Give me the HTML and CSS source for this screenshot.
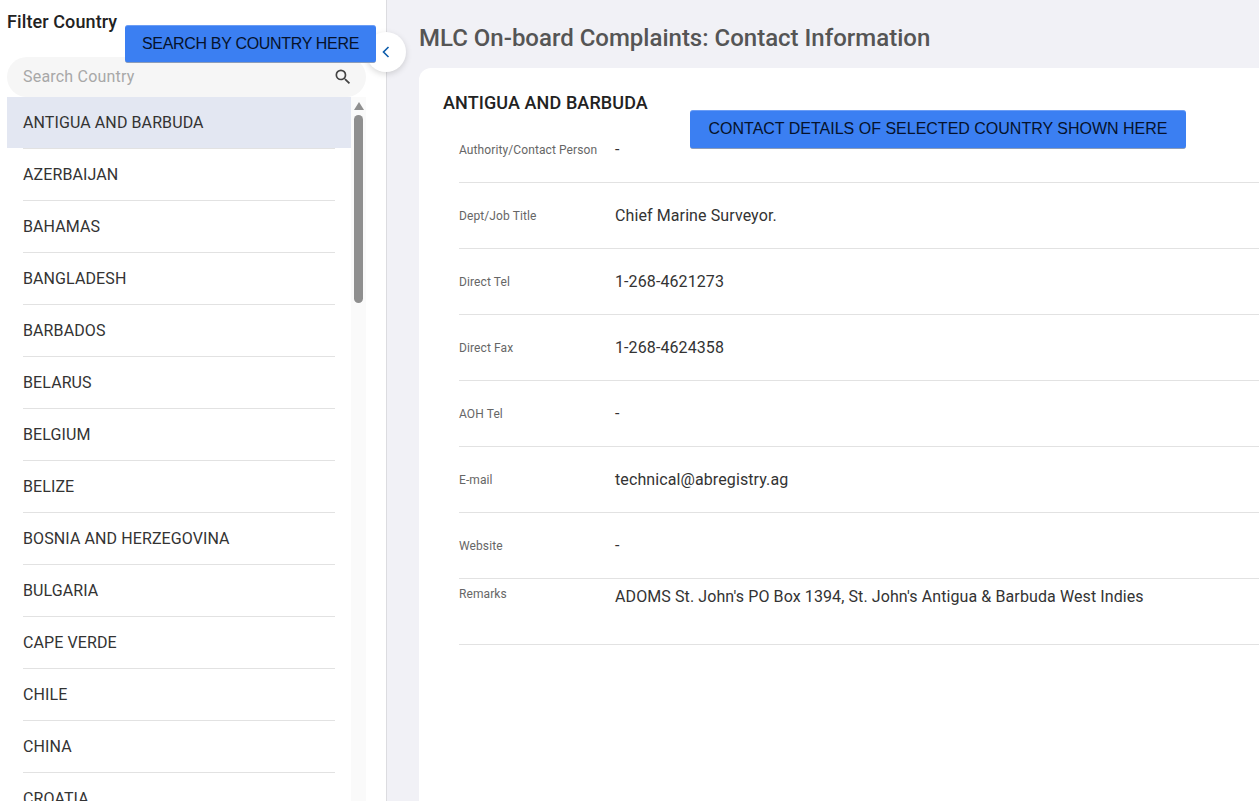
FILE: index.html
```html
<!DOCTYPE html>
<html lang="en">
<head>
<meta charset="utf-8">
<title>MLC On-board Complaints: Contact Information</title>
<link rel="stylesheet" href="styles.css">
</head>
<body>
<div class="app">
  <aside class="sidebar">
    <h2 class="filter-title">Filter Country</h2>
    <div class="search">
      <span class="search-placeholder">Search Country</span>
      <svg class="search-icon" viewBox="0 0 24 24" width="20" height="20"><path fill="#444" d="M15.5 14h-.79l-.28-.27A6.47 6.47 0 0 0 16 9.5 6.5 6.5 0 1 0 9.5 16c1.61 0 3.09-.59 4.23-1.57l.27.28v.79l5 4.99L20.49 19l-4.99-5zm-6 0C7.01 14 5 11.99 5 9.5S7.01 5 9.5 5 14 7.01 14 9.5 11.99 14 9.5 14z"/></svg>
    </div>
    <div class="list-wrap">
      <ul class="country-list">
        <li class="country selected"><span class="country-name">ANTIGUA AND BARBUDA</span></li>
        <li class="country"><span class="country-name">AZERBAIJAN</span></li>
        <li class="country"><span class="country-name">BAHAMAS</span></li>
        <li class="country"><span class="country-name">BANGLADESH</span></li>
        <li class="country"><span class="country-name">BARBADOS</span></li>
        <li class="country"><span class="country-name">BELARUS</span></li>
        <li class="country"><span class="country-name">BELGIUM</span></li>
        <li class="country"><span class="country-name">BELIZE</span></li>
        <li class="country"><span class="country-name">BOSNIA AND HERZEGOVINA</span></li>
        <li class="country"><span class="country-name">BULGARIA</span></li>
        <li class="country"><span class="country-name">CAPE VERDE</span></li>
        <li class="country"><span class="country-name">CHILE</span></li>
        <li class="country"><span class="country-name">CHINA</span></li>
        <li class="country"><span class="country-name">CROATIA</span></li>
      </ul>
      <div class="scrollbar">
        <span class="scroll-arrow"></span>
        <span class="scroll-thumb"></span>
      </div>
    </div>
  </aside>
  <main class="content">
    <h1 class="page-title">MLC On-board Complaints: Contact Information</h1>
    <section class="card">
      <h3 class="card-title">ANTIGUA AND BARBUDA</h3>
      <div class="row"><span class="label">Authority/Contact Person</span><span class="value">-</span></div>
      <div class="row"><span class="label">Dept/Job Title</span><span class="value">Chief Marine Surveyor.</span></div>
      <div class="row"><span class="label">Direct Tel</span><span class="value">1-268-4621273</span></div>
      <div class="row"><span class="label">Direct Fax</span><span class="value">1-268-4624358</span></div>
      <div class="row"><span class="label">AOH Tel</span><span class="value">-</span></div>
      <div class="row"><span class="label">E-mail</span><span class="value">technical@abregistry.ag</span></div>
      <div class="row"><span class="label">Website</span><span class="value">-</span></div>
      <div class="row top"><span class="label">Remarks</span><span class="value">ADOMS St. John's PO Box 1394, St. John's Antigua &amp; Barbuda West Indies</span></div>
    </section>
  </main>
</div>
<button class="toggle" type="button" aria-label="Collapse">
  <svg viewBox="0 0 10 14" width="10" height="14"><path d="M7.5 2 2.5 7l5 5" fill="none" stroke="#0b5cab" stroke-width="1.6"/></svg>
</button>
<div class="callout callout-search">SEARCH BY COUNTRY HERE</div>
<div class="callout callout-details">CONTACT DETAILS OF SELECTED COUNTRY SHOWN HERE</div>
</body>
</html>
```

FILE: styles.css
```css
* { box-sizing: border-box; }
html, body { margin: 0; height: 100%; overflow: hidden; }
body { font-family: Roboto, "Liberation Sans", sans-serif; color: #333; background: #f1f1f6; }

.app { display: flex; height: 801px; }

.sidebar {
  width: 387px;
  flex: none;
  background: #fff;
  border-right: 1px solid #dcdce0;
  padding: 0 20px 0 7px;
  display: flex;
  flex-direction: column;
  overflow: hidden;
}
.filter-title {
  margin: 0;
  height: 57px;
  padding-top: 12px;
  font-size: 18px;
  line-height: 20px;
  font-weight: 500;
  letter-spacing: .1px;
  color: #222;
}
.search {
  height: 40px;
  flex: none;
  border-radius: 20px;
  background: #f6f6f6;
  display: flex;
  align-items: center;
  justify-content: space-between;
  padding: 0 13px 0 16px;
}
.search-placeholder { font-size: 16px; letter-spacing: .2px; color: #a8a8a8; padding-bottom: 2px; }
.search-icon { display: block; }

.list-wrap { display: flex; flex: 1; min-height: 0; }
.country-list { list-style: none; margin: 0; padding: 0; width: 344px; flex: none; }
.country { height: 52px; padding: 0 16px; }
.country.selected { background: linear-gradient(#e3e7f2, #e3e7f2) no-repeat top / 100% 51px; }
.country-name {
  display: flex;
  align-items: center;
  height: 52px;
  font-size: 16px;
  letter-spacing: .1px;
  color: #333;
  border-bottom: 1px solid #e2e2e2;
}

.scrollbar {
  width: 15px;
  flex: none;
  background: #fafafa;
  display: flex;
  flex-direction: column;
  align-items: center;
  padding-top: 5px;
}
.scroll-arrow {
  width: 0;
  height: 0;
  border-left: 5px solid transparent;
  border-right: 5px solid transparent;
  border-bottom: 8px solid #8f8f8f;
}
.scroll-thumb {
  width: 9px;
  height: 188px;
  margin-top: 5px;
  border-radius: 5px;
  background: #8f8f8f;
}

.content { flex: 1; min-width: 0; padding-left: 32px; display: flex; flex-direction: column; }
.page-title {
  margin: 0;
  height: 68px;
  padding-top: 23px;
  font-size: 24px;
  line-height: 30px;
  font-weight: 500;
  color: #555;
  white-space: nowrap;
}
.card {
  flex: 1;
  background: #fff;
  border-radius: 12px 0 0 0;
  padding: 25px 0 0 24px;
}
.card-title {
  margin: 0;
  height: 24px;
  font-size: 18px;
  line-height: 20px;
  font-weight: 500;
  letter-spacing: .1px;
  color: #222;
}
.row {
  display: flex;
  align-items: center;
  height: 66px;
  margin-left: 16px;
  border-bottom: 1px solid #e2e2e2;
}
.row.top { align-items: flex-start; }
.label { width: 156px; flex: none; font-size: 12px; letter-spacing: .1px; color: #666; }
.value { font-size: 16px; letter-spacing: .1px; color: #333; }
.row.top .label { padding-top: 8px; }
.row.top .value { padding-top: 8px; }

.toggle {
  position: absolute;
  left: 366px;
  top: 32px;
  width: 40px;
  height: 40px;
  padding: 0;
  border: 0;
  border-radius: 50%;
  background: #fff;
  box-shadow: 0 2px 6px rgba(0, 0, 0, .15);
  display: flex;
  align-items: center;
  justify-content: center;
}
.callout {
  position: absolute;
  display: flex;
  align-items: center;
  justify-content: center;
  padding-bottom: 2px;
  background: #3b7ff2;
  border-radius: 3px;
  border-top: 1px solid #6b9df5;
  border-bottom: 1px solid #8c9cb8;
  font-family: "Liberation Sans", Arial, sans-serif;
  font-size: 16px;
  color: #06122b;
  white-space: nowrap;
}
.callout-search { left: 125px; top: 25px; width: 251px; height: 38px; letter-spacing: -.32px; padding-bottom: 1px; }
.callout-details { left: 690px; top: 110px; width: 496px; height: 39px; }
```
